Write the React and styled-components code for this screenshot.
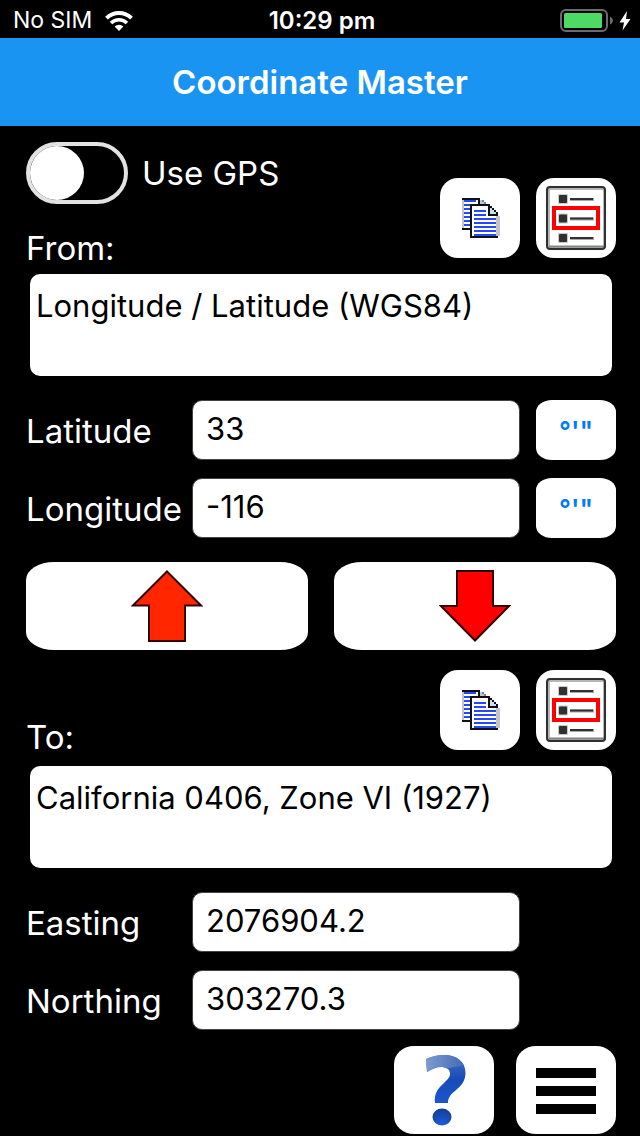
import React from "react";
import styled, { createGlobalStyle } from "styled-components";

const GlobalStyle = createGlobalStyle`
  * { box-sizing: border-box; }
  body {
    margin: 0;
    background: #000;
    color: #fff;
    font-family: Inter, "Liberation Sans", sans-serif;
  }
  button, input, textarea { font: inherit; }
`;

const Screen = styled.div`
  display: flex;
  flex-direction: column;
  min-height: 100vh;
`;

const StatusBar = styled.div`
  display: grid;
  grid-template-columns: 1fr auto 1fr;
  align-items: center;
  height: 38px;
  padding: 3px 9px 0 13px;
  font-size: 23px;
  line-height: 35px;
`;

const StatusSide = styled.div`
  display: flex;
  align-items: center;
  justify-content: ${(p) => (p.$end ? "flex-end" : "flex-start")};
  gap: ${(p) => (p.$end ? 5 : 13)}px;
`;

const Clock = styled.time`
  font-size: 24px;
  font-weight: 600;
`;

const TitleBar = styled.header`
  display: flex;
  align-items: center;
  justify-content: center;
  height: 88px;
  background: #1a94f3;
`;

const Title = styled.h1`
  margin: 0;
  font-size: 33px;
  line-height: 40px;
  font-weight: 600;
`;

const Content = styled.main`
  display: flex;
  flex-direction: column;
  padding: 16px 24px 0 26px;
`;

const SectionHead = styled.div`
  display: flex;
  justify-content: space-between;
  align-items: flex-end;
`;

const HeadText = styled.div`
  display: flex;
  flex-direction: column;
  gap: 24px;
  padding-bottom: ${(p) => (p.$compact ? 5 : 2)}px;
`;

const Label = styled.label`
  font-size: 33px;
  line-height: 40px;
  white-space: nowrap;
`;

const FieldLabel = styled(Label)`
  padding-top: 2px;
`;

const SwitchRow = styled.label`
  display: flex;
  align-items: center;
  gap: 14px;
  font-size: 33px;
  line-height: 40px;
`;

const Switch = styled.input`
  appearance: none;
  width: 102px;
  height: 62px;
  margin: 0;
  border: 4px solid #e2e2e2;
  border-radius: 31px;
  background: #000;
  &::before {
    content: "";
    display: block;
    width: 54px;
    height: 54px;
    border-radius: 50%;
    background: #fff;
  }
  &:checked::before { margin-left: auto; }
`;

const Tools = styled.div`
  display: flex;
  gap: 16px;
  padding-bottom: 12px;
`;

const Button = styled.button`
  display: flex;
  align-items: center;
  justify-content: center;
  padding: 0;
  border: 0;
  background: #fff;
  cursor: pointer;
`;

const ToolButton = styled(Button)`
  width: 80px;
  height: 80px;
  border-radius: 18px;
`;

const UnitButton = styled(Button)`
  height: 60px;
  padding-top: 2px;
  border-radius: 16px / 12px;
  color: #007aff;
  font-size: 26px;
  font-weight: 600;
  line-height: 40px;
`;

const SystemBox = styled.textarea`
  display: block;
  width: 100%;
  height: 110px;
  padding: 12px 6px;
  border: 4px solid #000;
  border-radius: 14px;
  background: #fff;
  color: #000;
  font-size: 31px;
  line-height: 40px;
  resize: none;
`;

const Fields = styled.div`
  display: grid;
  grid-template-columns: 150px minmax(0, 1fr) 80px;
  gap: 18px 16px;
  align-items: center;
  margin-top: 20px;
`;

const Field = styled.input`
  grid-column: 2;
  width: 100%;
  height: 60px;
  padding: 0 13px 4px;
  border: 1px solid #444;
  border-radius: 10px;
  background: #fff;
  color: #000;
  font-size: 31px;
`;

const Arrows = styled.div`
  display: grid;
  grid-template-columns: 1fr 1fr;
  gap: 26px;
  margin: 24px 0 20px;
`;

const ArrowButton = styled(Button)`
  height: 88px;
  border-radius: 28px / 18px;
`;

const Footer = styled.footer`
  display: flex;
  justify-content: flex-end;
  gap: 22px;
  padding: 16px 0 2px;
`;

const FooterButton = styled(Button)`
  width: 100px;
  height: 88px;
  border-radius: 20px / 18px;
`;

function WifiIcon() {
  return (
    <svg width="28" height="20" viewBox="0 0 28 20" fill="none" stroke="#fff" aria-hidden="true">
      <path d="M1.5 7.2 A17.8 17.8 0 0 1 26.5 7.2" strokeWidth="4" />
      <path d="M6 12 A11.4 11.4 0 0 1 22 12" strokeWidth="3.6" />
      <path d="M9.6 15.6 A6.3 6.3 0 0 1 18.4 15.6 L14 20 Z" fill="#fff" stroke="none" />
    </svg>
  );
}

function BatteryIcon() {
  return (
    <svg width="54" height="23" viewBox="0 0 54 23" aria-hidden="true">
      <rect x="1" y="1" width="46" height="21" rx="5" fill="none" stroke="#6c6c6c" strokeWidth="2" />
      <rect x="4" y="4" width="38" height="15" rx="1.5" fill="#4cd964" />
      <path d="M50 7.5 Q53 9 53 11.5 Q53 14 50 15.5 Z" fill="#6c6c6c" />
    </svg>
  );
}

function BoltIcon() {
  return (
    <svg width="12" height="20" viewBox="0 0 12 20" aria-hidden="true">
      <path d="M8 0 L0.5 11.5 H5 L3.5 19.5 L11.5 8 H7 Z" fill="#fff" />
    </svg>
  );
}

const backLines = [1, 3, 5, 7, 9, 11, 13];
const frontLines = [10, 12, 14, 16, 18];

function CopyIcon() {
  return (
    <svg width="40" height="40" viewBox="0 0 20 20" shapeRendering="crispEdges" aria-hidden="true">
      <rect x="1" y="0" width="1" height="16" fill="#c4c4c4" />
      <path d="M1 0h9v1H1z M1 15h5v1H1z M9 1h1v2H9z" fill="#111" />
      {backLines.map((y) => (
        <rect key={y} x="2" y={y} width={y === 1 ? 6 : 3} height="1" fill="#2348ff" />
      ))}
      <path d="M10 1h1v1h1v1h-2z" fill="#b5cbe0" />
      <path d="M11 1h1v1h-1z M12 2h1v1h-1z" fill="#778594" />
      <path d="M5 3h10v1H5z M5 4h1v16H5z M14 4h1v5h-1z M15 8h4v1h-4z M15 4h1v1h-1z M16 5h1v1h-1z M17 6h1v1h-1z M18 7h1v1h-1z M5 19h14v1H5z" fill="#111" />
      <path d="M15 5h1v1h1v1h1v1h-3z" fill="#c7dff2" />
      <rect x="18" y="9" width="2" height="10" fill="#c4c4c4" />
      <path d="M7 6h6v1H7z M7 8h6v1H7z" fill="#2348ff" />
      {frontLines.map((y) => (
        <rect key={y} x="7" y={y} width="11" height="1" fill="#2348ff" />
      ))}
    </svg>
  );
}

function ListIcon() {
  return (
    <svg width="80" height="80" viewBox="0 0 80 80" aria-hidden="true">
      <rect x="12.5" y="10.5" width="56" height="59" rx="2" fill="#fff" stroke="#b5b5b5" strokeWidth="3" />
      <path d="M13 68.5 H68" stroke="#858585" strokeWidth="2" />
      <rect x="11" y="9" width="58" height="62" rx="3" fill="none" stroke="#303030" strokeWidth="2" />
      {[21, 40.5, 60].map((y) => (
        <g key={y}>
          <rect x="22" y={y - 5} width="10" height="10" rx="1" fill="#c9c9c9" />
          <rect x="23" y={y - 4} width="8" height="8" rx="1" fill="#303030" />
          <rect x="34" y={y - 1} width="24" height="3" fill="#a8a8a8" />
          <rect x="34" y={y - 1} width="23" height="2" fill="#303030" />
        </g>
      ))}
      <rect x="18" y="30" width="44" height="20" fill="none" stroke="#f00" strokeWidth="4" />
    </svg>
  );
}

function ArrowIcon({ down }) {
  return (
    <svg width="72" height="72" viewBox="0 0 72 72" aria-hidden="true">
      <path
        d={down ? "M36 70.500 L70 36 H54 V1 H18 V36 H2 Z" : "M36 1.500 L70 35.500 H54 V71 H18 V35.500 H2 Z"}
        fill={down ? "#f00" : "#ff2600"}
        stroke="#300"
        strokeWidth="2"
      />
    </svg>
  );
}

function HelpIcon() {
  return (
    <svg width="100" height="88" viewBox="0 0 100 88" aria-hidden="true">
      <defs>
        <linearGradient id="helpHook" x1="0" y1="0" x2="0" y2="1">
          <stop offset="0" stopColor="#4a72bd" />
          <stop offset="0.5" stopColor="#174cb8" />
          <stop offset="1" stopColor="#1a57d0" />
        </linearGradient>
        <linearGradient id="helpShine" x1="0" y1="0" x2="1" y2="0">
          <stop offset="0" stopColor="#7d9bd0" />
          <stop offset="1" stopColor="#4068b4" />
        </linearGradient>
        <radialGradient id="helpDot" cx="0.5" cy="0.85" r="0.8">
          <stop offset="0" stopColor="#1c5bd8" />
          <stop offset="1" stopColor="#153f96" />
        </radialGradient>
        <clipPath id="helpClip">
          <path d="M32 13 Q41 9 50 9 C63 9 71.500 16 71.500 27 C71.500 35 67 40 61 45 C56 49 54 52 54 57 H41 C40 49 43 43 49 38 C54 33 56 31 56 28 C56 23 52 21 47 21 C42 21 38 23 33 26 Z" />
        </clipPath>
      </defs>
      <g clipPath="url(#helpClip)">
        <rect x="32" y="8" width="40" height="50" fill="url(#helpHook)" />
        <path d="M32 8 H72 V19 C60 21 50 23 32 27 Z" fill="url(#helpShine)" />
      </g>
      <ellipse cx="48" cy="71" rx="9.500" ry="8.500" fill="url(#helpDot)" />
    </svg>
  );
}

function MenuIcon() {
  return (
    <svg width="60" height="48" viewBox="0 0 60 48" aria-hidden="true">
      <path d="M0 2h60v10H0z M0 20h60v10H0z M0 38h60v10H0z" />
    </svg>
  );
}

function SystemTools({ name }) {
  return (
    <Tools>
      <ToolButton type="button" aria-label={`Copy ${name}`}>
        <CopyIcon />
      </ToolButton>
      <ToolButton type="button" aria-label={`Choose ${name} system`}>
        <ListIcon />
      </ToolButton>
    </Tools>
  );
}

function CoordinateField({ id, label, value, unit }) {
  return (
    <>
      <FieldLabel htmlFor={id}>{label}</FieldLabel>
      <Field id={id} type="text" defaultValue={value} />
      {unit ? (
        <UnitButton type="button" aria-label={`${label} format`}>
          °'"
        </UnitButton>
      ) : (
        <span />
      )}
    </>
  );
}

export default function App() {
  return (
    <Screen>
      <GlobalStyle />
      <StatusBar>
        <StatusSide>
          <span>No SIM</span>
          <WifiIcon />
        </StatusSide>
        <Clock>10:29 pm</Clock>
        <StatusSide $end>
          <BatteryIcon />
          <BoltIcon />
        </StatusSide>
      </StatusBar>
      <TitleBar>
        <Title>Coordinate Master</Title>
      </TitleBar>
      <Content>
        <SectionHead>
          <HeadText>
            <SwitchRow>
              <Switch type="checkbox" role="switch" />
              Use GPS
            </SwitchRow>
            <Label htmlFor="from">From:</Label>
          </HeadText>
          <SystemTools name="from" />
        </SectionHead>
        <SystemBox id="from" defaultValue="Longitude / Latitude (WGS84)" />
        <Fields>
          <CoordinateField id="latitude" label="Latitude" value="33" unit />
          <CoordinateField id="longitude" label="Longitude" value="-116" unit />
        </Fields>
        <Arrows>
          <ArrowButton type="button" aria-label="Convert up">
            <ArrowIcon />
          </ArrowButton>
          <ArrowButton type="button" aria-label="Convert down">
            <ArrowIcon down />
          </ArrowButton>
        </Arrows>
        <SectionHead>
          <HeadText $compact>
            <Label htmlFor="to">To:</Label>
          </HeadText>
          <SystemTools name="to" />
        </SectionHead>
        <SystemBox id="to" defaultValue="California 0406, Zone VI (1927)" />
        <Fields>
          <CoordinateField id="easting" label="Easting" value="2076904.2" />
          <CoordinateField id="northing" label="Northing" value="303270.3" />
        </Fields>
        <Footer>
          <FooterButton type="button" aria-label="Help">
            <HelpIcon />
          </FooterButton>
          <FooterButton type="button" aria-label="Menu">
            <MenuIcon />
          </FooterButton>
        </Footer>
      </Content>
    </Screen>
  );
}
